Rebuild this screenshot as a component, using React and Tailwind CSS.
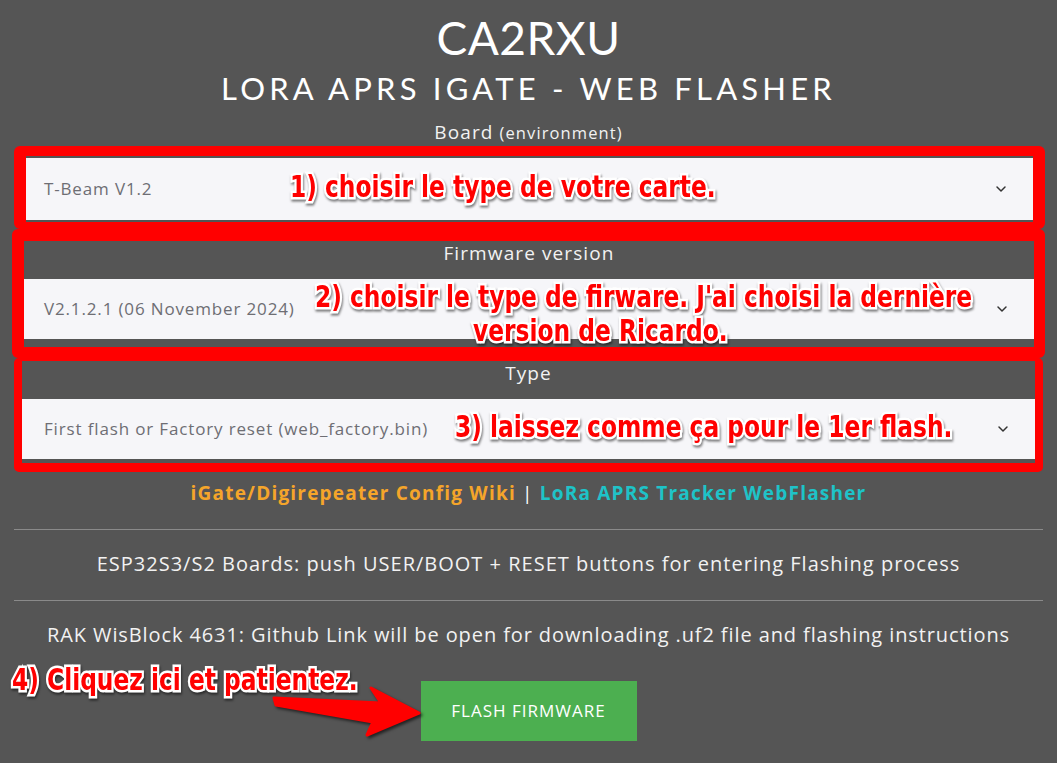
import React from "react";
import { ChevronDown } from "lucide-react";

const notes =
  "absolute origin-left scale-x-[0.865] whitespace-nowrap font-['Liberation_Sans_Narrow','DejaVu_Sans_Condensed',sans-serif] font-bold text-[30px] leading-[34px] text-[#ff0000] [paint-order:stroke_fill] [-webkit-text-stroke:5px_#ffffff] [filter:drop-shadow(1px_2px_1px_rgba(0,0,0,0.5))]";

const Select = ({ value, h, pl }) => (
  <div className={`${h} ${pl} bg-[#f6f6f9] flex items-center justify-between pr-[24px]`}>
    <span className="text-[17px] tracking-[0.85px] text-[#6e6e74]">{value}</span>
    <ChevronDown size={16} strokeWidth={2.2} className="text-[#333]" />
  </div>
);

export default function App() {
  return (
    <div className="relative min-h-[763px] bg-[#555555] text-white font-['Open_Sans',sans-serif] overflow-hidden">
      {/* titre */}
      <h1 className="pt-[14px] text-center font-['Lato',sans-serif] text-[46px] leading-[48px] tracking-[0.5px]">
        CA2RXU
      </h1>
      <h2 className="mt-[6px] text-center font-['Lato',sans-serif] text-[31px] leading-[40px] tracking-[4.2px]">
        LORA APRS IGATE - WEB FLASHER
      </h2>
      <div className="mt-[12px] text-center text-[19px] leading-[24px] tracking-[1.1px] text-[#f2f2f2]">
        Board <span className="text-[16.5px]">(environment)</span>
      </div>

      {/* board */}
      <div className="mt-[1px] ml-[14px] w-[1031px] border-[#ff0000] border-t-[10px] border-x-[12px] border-b-[7px] rounded-[6px]">
        <div className="pt-[2px] pb-[2px]">
          <Select value="T-Beam V1.2" h="h-[62px]" pl="pl-[18px]" />
        </div>
      </div>

      {/* firmware */}
      <div className="ml-[12px] w-[1033px] border-[#ff0000] border-t-[12px] border-l-[12px] border-r-[11px] border-b-[11px] rounded-[6px]">
        <div className="h-[38px] text-center text-[19px] leading-[24px] tracking-[1.1px] text-[#f2f2f2]">
          Firmware version
        </div>
        <Select value="V2.1.2.1 (06 November 2024)" h="h-[60px]" pl="pl-[20px]" />
        <div className="h-[8px]" />
      </div>

      {/* type */}
      <div className="ml-[14px] w-[1029px] border-[#ff0000] border-t-[3px] border-x-[8px] border-b-[9px] rounded-[5px]">
        <div className="h-[38px] text-center text-[19px] leading-[24px] tracking-[1.1px] text-[#f2f2f2]">
          Type
        </div>
        <Select
          value="First flash or Factory reset (web_factory.bin)"
          h="h-[60px]"
          pl="pl-[22px]"
        />
        <div className="h-[4px]" />
      </div>

      <div className="mt-[9px] text-center text-[19px] leading-[24px] font-bold tracking-[1.2px]">
        <span className="text-[#f5a52a]">iGate/Digirepeater Config Wiki</span>
        <span className="font-normal"> | </span>
        <span className="text-[#1ec3c8]">LoRa APRS Tracker WebFlasher</span>
      </div>

      <hr className="mt-[24px] mx-[14px] border-t border-[#8a8a8a]" />
      <p className="mt-[22px] text-center text-[20px] leading-[24px] tracking-[1px] text-[#f2f2f2]">
        ESP32S3/S2 Boards: push USER/BOOT + RESET buttons for entering Flashing process
      </p>
      <hr className="mt-[24px] mx-[14px] border-t border-[#8a8a8a]" />
      <p className="mt-[22px] text-center text-[20px] leading-[24px] tracking-[0.9px] text-[#f2f2f2]">
        RAK WisBlock 4631: Github Link will be open for downloading .uf2 file and flashing instructions
      </p>

      <div className="mt-[34px] flex justify-center">
        <button className="w-[216px] h-[60px] bg-[#4caf50] text-white text-[17px] tracking-[1px] font-medium uppercase">
          Flash Firmware
        </button>
      </div>

      {/* annotations */}
      <div className={`${notes} left-[290px] top-[170px]`}>
        1) choisir le type de votre carte.
      </div>
      <div className={`${notes} left-[315px] top-[280px]`}>
        2) choisir le type de firware. J'ai choisi la dernière
      </div>
      <div className={`${notes} left-[473px] top-[314px]`}>version de Ricardo.</div>
      <div className={`${notes} left-[455px] top-[410px]`}>
        3) laissez comme ça pour le 1er flash.
      </div>
      <div className={`${notes} left-[12px] top-[663px]`}>4) Cliquez ici et patientez.</div>

      <svg
        className="absolute left-0 top-0 pointer-events-none"
        width="1057"
        height="763"
        viewBox="0 0 1057 763"
      >
        <polygon
          points="274,698 381,703 371,688 419,713 367,735 373,722 276,705"
          fill="#ff0000"
          stroke="#ff0000"
          strokeWidth="3"
          strokeLinejoin="round"
          style={{ filter: "drop-shadow(2px 2px 1.5px rgba(0,0,0,0.6))" }}
        />
      </svg>
    </div>
  );
}
